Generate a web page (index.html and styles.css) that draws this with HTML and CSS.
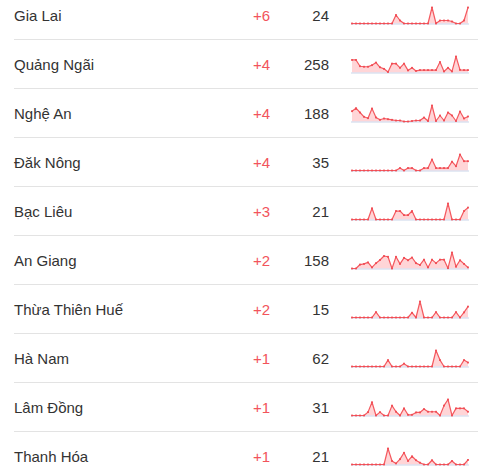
FILE: index.html
```html
<!DOCTYPE html>
<html lang="vi">
<head>
<meta charset="utf-8">
<link rel="stylesheet" href="styles.css">
</head>
<body>
<div class="table">
  <div class="row"><span class="name">Gia Lai</span><span class="delta">+6</span><span class="count">24</span><svg class="spark" data-i="0"></svg></div>
  <div class="row"><span class="name">Quảng Ngãi</span><span class="delta">+4</span><span class="count">258</span><svg class="spark" data-i="1"></svg></div>
  <div class="row"><span class="name">Nghệ An</span><span class="delta">+4</span><span class="count">188</span><svg class="spark" data-i="2"></svg></div>
  <div class="row"><span class="name">Đăk Nông</span><span class="delta">+4</span><span class="count">35</span><svg class="spark" data-i="3"></svg></div>
  <div class="row"><span class="name">Bạc Liêu</span><span class="delta">+3</span><span class="count">21</span><svg class="spark" data-i="4"></svg></div>
  <div class="row"><span class="name">An Giang</span><span class="delta">+2</span><span class="count">158</span><svg class="spark" data-i="5"></svg></div>
  <div class="row"><span class="name">Thừa Thiên Huế</span><span class="delta">+2</span><span class="count">15</span><svg class="spark" data-i="6"></svg></div>
  <div class="row"><span class="name">Hà Nam</span><span class="delta">+1</span><span class="count">62</span><svg class="spark" data-i="7"></svg></div>
  <div class="row"><span class="name">Lâm Đồng</span><span class="delta">+1</span><span class="count">31</span><svg class="spark" data-i="8"></svg></div>
  <div class="row"><span class="name">Thanh Hóa</span><span class="delta">+1</span><span class="count">21</span><svg class="spark" data-i="9"></svg></div>
</div>
<script src="script.js"></script>
</body>
</html>
```

FILE: styles.css
```css
html, body {
  margin: 0;
  padding: 0;
  background: #fff;
}
body {
  font-family: "Liberation Sans", Arial, sans-serif;
  font-size: 15px;
  color: #333;
  overflow: hidden;
}
.table {
  margin-top: -9px;
  padding-left: 14px;
}
.row {
  display: grid;
  grid-template-columns: 1fr 50px 59px 141px;
  align-items: center;
  height: 48px;
  border-bottom: 1px solid #e3e3e3;
  padding-right: 8px;
}
.name {
  white-space: nowrap;
}
.delta {
  text-align: right;
  color: #f2545b;
}
.count {
  text-align: right;
}
.spark {
  justify-self: end;
  width: 120px;
  height: 22px;
  display: block;
}
```

FILE: script.js
```js
var DATA = [
  [0,0,0,0,0,0,0,0,0,0,0,8.5,3,0,0,0,0,0,0,0,16,0,3,3,3,2,0,0,3,16],
  [12,12,6,5.5,5.5,7,9.5,5,3.5,0.5,8.5,8.5,4.5,8.5,2,4.5,1.5,2.3,2.3,2.3,2.3,2.3,10,1,4.5,1,15.3,2.5,2.3,2.3],
  [10.3,13.3,9,4.7,3.3,13,4,1.7,3,2.3,1.7,1,1,0,0,0.5,1,1,4,0.5,16,0.5,6,1,9,6,0.5,10,3,5],
  [0,0,0,0,0,0,0,0,0,0,0,0,2.3,0,2.3,2.3,0,0,2.3,2.3,10.3,2.3,2.3,2.3,2.3,8.3,4,15,8.7,8.7],
  [0,0,0,0,0,11,0,0,0,0,0,8.3,8.3,4.3,4.3,8.3,0,0,0,0,0,0,0,0,15.7,0,0,0,8.3,11.7],
  [0,0,3.7,4.3,5.7,1,5,8,11.7,11,0,11,4.3,10,7.7,10.3,5,3.3,8.3,1,8.3,5,8.3,8.3,0.3,15,1.7,7.7,4.3,1],
  [0,0,0,0,0,0,5.3,0,0,0,0,0,0,0,0,4.7,0,15.7,0,0,0,5.3,0,0,0,0,5.3,0,5,10.7],
  [0,0,0,0,0,0,0,0,0,6,0,0,0,2.7,0,0,0,0,0,0,0,15,6,0,0,0,0,0,6,3.7],
  [0,0,0,0,3.3,13,0,3.3,0,0,9.7,3.7,0,7,0.7,0.7,3,3,6.3,3.7,3.7,3.7,0,9.7,15.7,0,7,7,7,3.7],
  [0,0,0,0,0,0,0,0,0,15,3.3,1,5,11,3.3,7.7,4,1.7,0,0,4,0,0,0,0,3.3,0,0,0,4.3]
];
var NS = "http://www.w3.org/2000/svg";
var BASE = 19.5;
document.querySelectorAll(".spark").forEach(function (svg) {
  var d = DATA[+svg.getAttribute("data-i")];
  var max = Math.max.apply(null, d);
  svg.setAttribute("viewBox", "0 0 120 22");
  var pts = d.map(function (v, i) {
    return [2 + i * 4, +(BASE - v * 16 / max).toFixed(2)];
  });
  var line = pts.map(function (p) { return p[0] + "," + p[1]; }).join(" ");
  var area = document.createElementNS(NS, "polygon");
  area.setAttribute("points", "2," + BASE + " " + line + " 118," + BASE);
  area.setAttribute("fill", "#ffd5d7");
  svg.appendChild(area);
  var base = document.createElementNS(NS, "line");
  base.setAttribute("x1", "1"); base.setAttribute("x2", "119");
  base.setAttribute("y1", BASE + 0.5); base.setAttribute("y2", BASE + 0.5);
  base.setAttribute("stroke", "#c9d5ea"); base.setAttribute("stroke-width", "1");
  svg.appendChild(base);
  var pl = document.createElementNS(NS, "polyline");
  pl.setAttribute("points", line);
  pl.setAttribute("fill", "none");
  pl.setAttribute("stroke", "#f4595f");
  pl.setAttribute("stroke-width", "1.2");
  pl.setAttribute("stroke-linejoin", "round");
  svg.appendChild(pl);
  pts.forEach(function (p) {
    var c = document.createElementNS(NS, "rect");
    c.setAttribute("x", p[0] - 0.9); c.setAttribute("y", p[1] - 0.9);
    c.setAttribute("width", "1.8"); c.setAttribute("height", "1.8");
    c.setAttribute("fill", "#f04a52");
    svg.appendChild(c);
  });
});
```
